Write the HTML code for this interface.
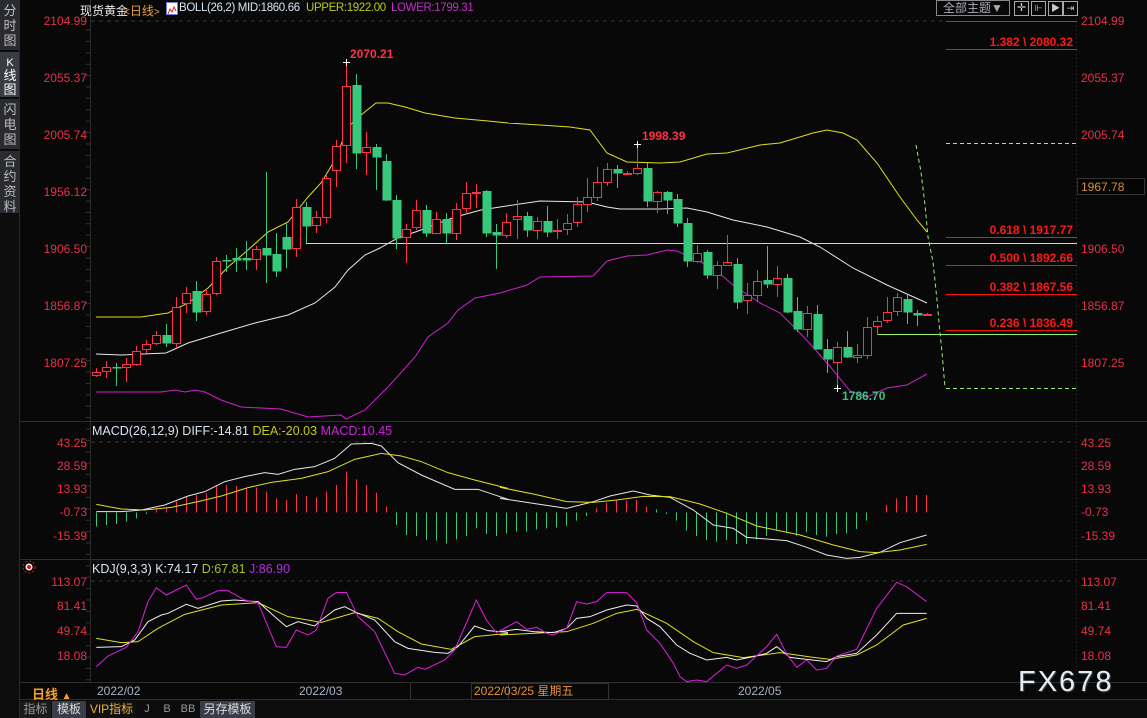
<!DOCTYPE html>
<html><head><meta charset="utf-8"><style>
html,body{margin:0;padding:0;background:#080808;width:1147px;height:718px;overflow:hidden}
body{font-family:"Liberation Sans","Noto Sans CJK SC",sans-serif;position:relative}
.a{position:absolute;white-space:nowrap}
.h{font-size:11.5px;letter-spacing:-0.35px}
</style></head><body>
<svg id="s" width="1147" height="718" style="position:absolute;left:0;top:0" xmlns="http://www.w3.org/2000/svg" font-family="Liberation Sans, Noto Sans CJK SC, sans-serif">
<rect x="0" y="0" width="19" height="718" fill="#0c0c0c"/>
<rect x="0" y="0" width="19" height="50" fill="#2a2b30"/>
<rect x="0" y="52" width="19" height="45" fill="#3a3c44"/>
<rect x="0" y="99" width="19" height="50" fill="#2a2b30"/>
<rect x="0" y="151" width="19" height="62" fill="#2a2b30"/>
<line x1="19.5" y1="0" x2="19.5" y2="718" stroke="#2a2a2a"/>
<g fill="#bcbcbc" font-size="13" text-anchor="middle">
<text x="10" y="15">分</text><text x="10" y="30">时</text><text x="10" y="45">图</text>
<text x="10" y="66" fill="#fff" font-size="11">K</text><text x="10" y="80" fill="#fff">线</text><text x="10" y="94" fill="#fff">图</text>
<text x="10" y="114">闪</text><text x="10" y="129">电</text><text x="10" y="144">图</text>
<text x="10" y="166">合</text><text x="10" y="181">约</text><text x="10" y="196">资</text><text x="10" y="211">料</text>
</g>
<line x1="90.5" y1="0" x2="90.5" y2="682" stroke="#2a2a2a"/>
<line x1="1076.5" y1="14" x2="1076.5" y2="682" stroke="#333" stroke-dasharray="1,3"/>
<line x1="20" y1="421.5" x2="1147" y2="421.5" stroke="#2e2e2e"/>
<line x1="20" y1="559.5" x2="1147" y2="559.5" stroke="#2e2e2e"/>
<line x1="20" y1="682.5" x2="1147" y2="682.5" stroke="#2e2e2e"/>
<line x1="20" y1="699.5" x2="1147" y2="699.5" stroke="#2e2e2e"/>
<line x1="91" y1="21" x2="946" y2="21" stroke="#3a3a3a" stroke-dasharray="4,4"/>
<line x1="91" y1="442" x2="1076" y2="442" stroke="#3a3a3a" stroke-dasharray="4,4"/>
<line x1="91" y1="581" x2="1076" y2="581" stroke="#3a3a3a" stroke-dasharray="4,4"/>
<g id="dyn"></g>
</svg>

<div class="a" style="left:80px;top:2px;font-size:12px;color:#e8e8e8">现货黄金</div>
<div class="a" style="left:124px;top:2px;font-size:12px;color:#e8a040"><span style="font-size:10px">&lt;</span>日线<span style="font-size:10px">&gt;</span></div>
<div class="a" style="left:166px;top:2px;width:10px;height:11px;background:#fff;border:1px solid #6a7ad8"><svg width="10" height="11"><polyline points="1,9 3,4 5,7 7,2 9,6" fill="none" stroke="#e02020"/></svg></div>
<div class="a h" style="left:179px;top:2px;color:#d8e4f0">BOLL(26,2) MID:1860.66</div>
<div class="a h" style="left:306px;top:2px;color:#b8cc10">UPPER:1922.00</div>
<div class="a h" style="left:391px;top:2px;color:#c030c8">LOWER:1799.31</div>
<div class="a" style="left:936px;top:0px;width:72px;height:14px;border:1px solid #888;color:#aab;font-size:12px;line-height:14px;text-align:center">全部主题▼</div>
<div class="a" style="left:1014px;top:1px;width:13px;height:13px;border:1px solid #aaa;color:#ccc;font-size:11px;line-height:13px;text-align:center">✛</div>
<div class="a" style="left:1031px;top:1px;width:13px;height:13px;border:1px solid #aaa;color:#ccc;font-size:9px;line-height:13px;text-align:center">⊩</div>
<div class="a" style="left:1048px;top:1px;width:13px;height:13px;border:1px solid #aaa;color:#ccc;font-size:9px;line-height:13px;text-align:center">▶</div>
<div class="a" style="left:1063px;top:1px;width:13px;height:13px;border:1px solid #aaa;color:#ccc;font-size:9px;line-height:13px;text-align:center">⇥</div>

<div class="a" style="left:92px;top:424px;font-size:12.5px;color:#d8e4f0">MACD(26,12,9) DIFF:-14.81 <span style="color:#c8c820">DEA:-20.03</span> <span style="color:#d020e0">MACD:10.45</span></div>
<div class="a" style="left:92px;top:562px;font-size:12.5px;color:#d8e4f0">KDJ(9,3,3) K:74.17 <span style="color:#a8c020">D:67.81</span> <span style="color:#b030e0">J:86.90</span></div>

<div class="a" style="left:32px;top:684px;font-size:13px;font-weight:bold;color:#f0a030">日线 <span style="font-size:10px">▲</span></div>
<div class="a" style="left:97px;top:684px;font-size:12px;color:#a8b4c8">2022/02</div>
<div class="a" style="left:299px;top:684px;font-size:12px;color:#a8b4c8">2022/03</div>
<div class="a" style="left:410px;top:683px;width:97px;height:16px;border-left:1px solid #333;border-right:1px solid #333"></div>
<div class="a" style="left:471px;top:683px;width:134px;height:15px;border:1px solid #333;font-size:12px;color:#e89030;line-height:15px;padding-left:2px">2022/03/25 星期五</div>
<div class="a" style="left:738px;top:684px;font-size:12px;color:#a8b4c8">2022/05</div>
<div class="a" style="left:20px;top:700px;width:1127px;height:18px;background:#0c0c0c"></div>
<div class="a" style="left:20px;top:701px;width:31px;height:17px;background:#1a1a1a;color:#999;font-size:12px;line-height:17px;text-align:center">指标</div>
<div class="a" style="left:52px;top:701px;width:34px;height:17px;background:#3a3c48;color:#ddd;font-size:12px;line-height:17px;text-align:center">模板</div>
<div class="a" style="left:87px;top:701px;width:49px;height:17px;background:#101010;color:#f0b030;font-size:12px;line-height:17px;text-align:center">VIP指标</div>
<div class="a" style="left:137px;top:701px;width:20px;height:17px;color:#999;font-size:11px;line-height:17px;text-align:center">J</div>
<div class="a" style="left:158px;top:701px;width:18px;height:17px;color:#999;font-size:11px;line-height:17px;text-align:center">B</div>
<div class="a" style="left:177px;top:701px;width:22px;height:17px;color:#999;font-size:11px;line-height:17px;text-align:center">BB</div>
<div class="a" style="left:200px;top:701px;width:55px;height:17px;background:#3a3c48;color:#ddd;font-size:12px;line-height:17px;text-align:center">另存模板</div>
<div class="a" style="left:1018px;top:666px;font-size:29px;color:#e4ecf4;letter-spacing:2px;text-shadow:1px 1px 1px #444">FX678</div>
<div class="a" style="left:1077px;top:178px;width:68px;height:17px;border:1px solid #333;background:#050505;color:#d89030;font-size:12px;line-height:17px;padding-left:3px;box-sizing:border-box">1967.78</div>

<script>
var NS="http://www.w3.org/2000/svg",g=document.getElementById("dyn");
function el(t,a,txt){var e=document.createElementNS(NS,t);for(var k in a)e.setAttribute(k,a[k]);if(txt!=null)e.textContent=txt;g.appendChild(e);return e;}
function pl(pts,c,w,dash){var s=[];for(var i=0;i<pts.length;i+=2)s.push(pts[i]+","+pts[i+1]);var o={points:s.join(" "),fill:"none",stroke:c,"stroke-width":w||1};if(dash)o["stroke-dasharray"]=dash;el("polyline",o);}
function zp(arr,ox,oy){var r=[];for(var i=0;i<arr.length;i+=2){r.push(ox+arr[i]/3,oy+arr[i+1]/3);}return r;}
var RED="#ff3048",GRN="#38c87c",AX="#e8304a";
var L=[["2104.99",20],["2055.37",77],["2005.74",134],["1956.12",191],["1906.50",248],["1856.87",305],["1807.25",362],
["43.25",442],["28.59",465],["13.93",488],["-0.73",511],["-15.39",535],["113.07",581],["81.41",605],["49.74",630],["18.08",655]];
L.forEach(function(l){el("text",{x:87,y:l[1]+5,fill:AX,"font-size":12,"text-anchor":"end"},l[0]);if(l[0]!="1956.12")el("text",{x:1081,y:l[1]+5,fill:AX,"font-size":12},l[0]);});
for(var y=30;y<680;y+=11.4){el("line",{x1:86,y1:y,x2:90,y2:y,stroke:"#333"});}
pl([96,317,141,317,168,313,188,303,208,288,228,267,248,250,268,232,288,222,308,197,321,183,335,160,348,127,361,115,376,103,388,103,405,107,425,113,455,118,488,121,508,123,540,125,570,127,590,130,607,153,627,162,660,163,680,162,707,154,727,153,760,145,780,143,813,133,827,130,843,133,857,140,877,163,900,197,917,220,927,232],"#e0e020");
pl([96,354,121,355,166,353,188,343,221,333,255,323,288,315,315,303,335,287,348,270,365,255,380,248,398,238,421,230,455,217,481,210,500,207,540,201,587,202,607,207,620,209,660,209,687,208,707,212,733,220,767,227,800,237,820,247,853,268,887,285,927,303],"#e8e8e8");
pl([96,392,161,392,175,390,185,392,195,390,205,392,221,400,241,407,281,409,308,417,341,415,346,419,365,410,388,387,415,357,428,337,448,323,458,310,475,298,500,293,527,285,540,277,593,276,607,261,627,256,647,255,667,250,677,251,690,257,713,268,733,285,760,303,780,313,797,330,813,347,833,370,850,391,867,397,887,388,907,385,927,374],"#d020d0");
el("line",{x1:306,y1:243.5,x2:1077,y2:243.5,stroke:"#b0f090"});
el("line",{x1:877,y1:334.5,x2:1077,y2:334.5,stroke:"#90f070"});
[[21,null],[49,"1.382 \\ 2080.32"],[237,"0.618 \\ 1917.77"],[265,"0.500 \\ 1892.66"],[294,"0.382 \\ 1867.56"],[330,"0.236 \\ 1836.49"]].forEach(function(f){
el("line",{x1:946,y1:f[0]+.5,x2:1077,y2:f[0]+.5,stroke:"#ff1010"});
if(f[1])el("text",{x:1073,y:f[0]-3,fill:"#ff1818","font-size":12,"font-weight":"bold","text-anchor":"end"},f[1]);});
pl([946,143.5,1077,143.5],"#a0f080",1,"4,3");
pl([946,388.5,1077,388.5],"#90f070",1,"4,3");
pl([916,145,921,172,925,205,928,237,933,262,937,300,940,333,942,352,945,388],"#90f070",1,"4,3");
var C=[[96,372,375,368,377,1],[106,367,371,361,378,1],[116,367,368,363,386,0],[126,364,367,358,382,1],[136,351,364,346,366,1],[146,344,349,340,353,1],[156,335,343,331,345,1],[166,335,343,324,347,0],[176,307,343,297,347,1],[186,293,303,287,313,1],[196,291,312,281,321,0],[206,294,311,289,315,1],[216,261,293,257,295,1],[226,260,261,255,272,0],[236,258,260,248,272,0],[246,258,260,241,270,0],[256,249,259,246,270,1],[266,248,255,172,283,0],[276,254,271,233,277,0],[286,237,249,223,268,0],[296,207,248,199,257,1],[306,207,226,202,243,0],[316,217,225,211,233,1],[326,178,217,175,223,1],[336,146,170,140,187,1],[346,86,145,62,163,1],[356,85,153,74,169,0],[366,147,152,132,175,1],[376,147,157,144,190,0],[386,161,200,154,201,0],[396,200,238,195,249,0],[406,229,237,224,263,1],[416,210,227,200,230,1],[426,210,233,205,237,0],[436,219,233,212,234,1],[446,219,233,213,244,0],[456,209,233,203,240,1],[466,193,208,182,214,1],[476,192,193,184,208,1],[486,191,233,190,237,0],[496,232,235,224,269,0],[506,222,235,213,238,1],[517,216,219,200,239,1],[527,216,230,212,237,0],[537,221,230,217,239,1],[547,221,232,206,237,0],[557,230,231,219,239,1],[567,223,229,214,235,1],[577,204,222,197,227,1],[587,197,204,178,212,1],[597,182,197,167,201,1],[607,169,182,163,186,1],[617,169,173,165,188,0],[627,173,174,171,175,1],[637,168,173,144,175,1],[647,168,201,163,207,0],[657,192,201,191,213,1],[667,192,200,191,214,0],[677,199,223,194,227,0],[687,223,261,218,267,0],[697,253,261,245,263,1],[707,252,275,250,279,0],[717,265,275,261,289,1],[727,262,265,235,265,1],[737,264,302,258,309,0],[747,295,300,283,314,1],[757,281,295,270,302,1],[767,280,284,246,288,0],[777,278,284,266,297,1],[787,278,312,274,313,0],[797,311,329,297,332,0],[807,313,329,306,337,1],[817,314,349,305,349,0],[827,349,359,339,373,0],[837,347,362,342,388,1],[847,347,357,331,358,0],[857,355,357,344,363,1],[867,327,355,317,359,1],[877,321,326,316,335,1],[887,312,320,297,323,1],[897,297,311,293,316,1],[907,299,312,295,324,0],[917,313,315,310,326,0],[927,314,315,313,316,1]];
C.forEach(function(c){var col=c[5]?RED:GRN;
el("line",{x1:c[0]+.5,y1:c[3],x2:c[0]+.5,y2:c[4],stroke:col});
var h=Math.max(c[2]-c[1],1);
if(c[5])el("rect",{x:c[0]-3.5,y:c[1]+.5,width:8,height:h,fill:"#080808",stroke:col});
else el("rect",{x:c[0]-3.5,y:c[1],width:9,height:h+.5,fill:col});});
el("text",{x:350,y:58,fill:"#ff3048","font-size":12,"font-weight":"bold"},"2070.21");
el("text",{x:642,y:140,fill:"#ff3048","font-size":12,"font-weight":"bold"},"1998.39");
el("text",{x:842,y:400,fill:"#40c080","font-size":12,"font-weight":"bold"},"1786.70");
[[346,62],[637,144],[837,388]].forEach(function(p){el("path",{d:"M"+(p[0]-3)+" "+(p[1]+.5)+"h7M"+(p[0]+.5)+" "+(p[1]-3)+"v7",stroke:"#fff"});});
var base=512.5;
var b1=[320,315,312,305,295,282,265,262,245,228,225,220,198,195,198,205,203,215,235,240,222,228,232,215,195,155,178,195,218,260,315,345,348,360,362,370,358,348,325,342,348];
var b2=[340,335,335,328,325,322,317,302,288,265,248,240,242,240,260,268,282,302,332,348,360,365,360,372,372,358,348,332,335,347,337,345,350,342,340,327,302,277,255,235,228,225,225];
var bars=b1.concat(b2);
bars.forEach(function(v,i){var x=96+10*i+.5,y=420+v/3;var red=(i>=6&&i<=29)||(i>=50&&i<=55)||i>=78;
if(i==58)red=false;el("line",{x1:x,y1:base,x2:x,y2:y,stroke:red?RED:GRN});});
pl(zp([25,275,100,275,160,270,230,255,300,228,350,215,410,185,470,170,530,158,570,163,620,148,680,140,740,115,790,72,850,70,880,78,930,128,1000,165,1100,208,1170,208,1260,238],88,420).concat(zp([0,235,100,250,200,265,280,245,330,228,400,213,450,225,510,232,580,270,640,315,700,325,740,352,800,357,860,362,920,382,980,405,1040,415,1080,412,1140,397,1200,368,1280,345],500,420)),"#e8e8e8");
pl(zp([25,253,100,267,170,270,250,262,330,245,400,228,480,203,550,187,640,175,720,155,800,118,880,100,940,108,1000,125,1080,158,1160,180,1260,205],88,420).concat(zp([0,202,100,222,200,245,280,247,350,240,430,229,510,230,600,252,680,280,770,318,900,345,1000,375,1080,395,1130,398,1200,390,1280,373],500,420)),"#e0e020");
pl(zp([25,655,100,668,150,665,210,625,290,583,400,555,510,548,600,590,700,607,800,578,870,595,930,635,1000,672,1090,688,1160,650,1260,640],88,420).concat(zp([0,645,200,635,280,610,350,580,410,568,500,610,580,665,640,698,730,713,840,698,940,712,990,718,1070,705,1130,675,1210,615,1280,595],500,420)),"#e0e020");
pl(zp([25,682,100,680,140,660,180,605,220,585,240,580,295,553,330,565,400,543,440,540,510,545,560,590,595,620,630,605,680,618,700,600,740,570,770,560,800,575,860,600,920,665,960,685,1040,697,1080,700,1110,680,1160,618,1200,632,1260,637],88,420).concat(zp([0,635,50,628,100,635,160,638,200,625,230,595,270,590,320,570,380,555,410,558,440,595,480,620,530,675,570,700,620,720,680,712,710,720,760,710,800,700,830,680,870,712,920,718,980,725,1010,710,1070,700,1130,645,1190,580,1280,580],500,420)),"#f0f0f0");
pl(zp([25,740,60,708,115,682,150,635,180,545,205,503,235,525,295,495,325,538,345,533,390,512,420,512,470,540,510,548,565,680,595,682,625,630,660,645,685,630,720,535,745,518,775,517,810,590,860,635,920,760,950,765,990,742,1010,748,1070,720,1100,690,1165,540,1195,600,1225,638,1260,620],88,420).concat(zp([0,632,50,605,80,628,110,622,140,640,160,645,200,625,230,545,260,552,290,545,320,518,380,518,410,548,440,630,480,670,520,730,540,770,560,785,590,780,620,785,680,735,710,745,740,735,800,680,830,643,860,702,890,742,920,720,950,750,980,745,1010,708,1070,688,1130,565,1190,487,1220,500,1280,545],500,420)),"#e020e0");
el("circle",{cx:29,cy:567,r:3.5,fill:"#fff"});el("circle",{cx:29,cy:567,r:2,fill:"#e01010"});
el("circle",{cx:29,cy:567,r:6,fill:"none",stroke:"#e01010","stroke-dasharray":"2,2"});
</script>
</body></html>
